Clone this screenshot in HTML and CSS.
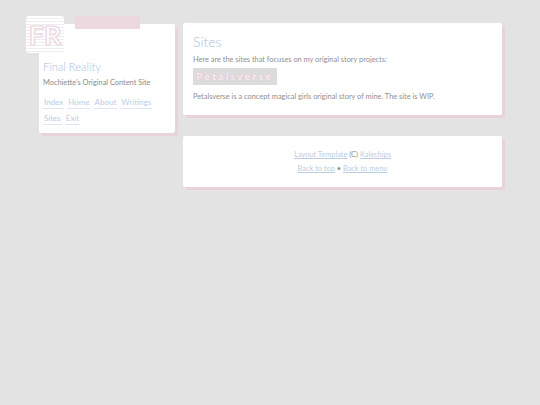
FILE: index.html
```html
<!DOCTYPE html>
<html lang="en">
<head>
<meta charset="utf-8">
<title>Final Reality</title>
<link rel="stylesheet" href="styles.css">
</head>
<body>
<div class="layout">
  <aside class="sidebar card">
    <div class="tape"></div>
    <div class="logo"><span class="logo-text">FR</span></div>
    <h1 class="site-title">Final Reality</h1>
    <p class="tagline">Mochiette's Original Content Site</p>
    <nav class="nav">
      <a href="#">Index</a><a href="#">Home</a><a href="#">About</a><a href="#">Writings</a><a href="#">Sites</a><a href="#">Exit</a>
    </nav>
  </aside>
  <main class="content">
    <section class="main card">
      <h2 class="heading">Sites</h2>
      <p class="text">Here are the sites that focuses on my original story projects:</p>
      <div class="banner">Petalsverse</div>
      <p class="text">Petalsverse is a concept magical girls original story of mine. The site is WIP.</p>
    </section>
    <footer class="footer card">
      <p class="foot-line"><a href="#">Layout Template</a> (C) <a href="#">Kalechips</a></p>
      <p class="foot-line"><a href="#">Back to top</a> • <a href="#">Back to menu</a></p>
    </footer>
  </main>
</div>
</body>
</html>
```
FILE: styles.css
```css
* { box-sizing: border-box; }
html, body { margin: 0; height: 100%; }
body {
  background: #e3e3e3;
  font-family: "Lato", "Open Sans", sans-serif;
  color: #8a8a8a;
  font-size: 7.4px;
}
.layout {
  display: flex;
  align-items: flex-start;
  gap: 8px;
  padding: 23px 38px 0 39px;
}
.card {
  background: #fff;
  border-radius: 2px;
  box-shadow: 3px 3px 0 #e8d3da;
}
.sidebar {
  position: relative;
  flex: 0 0 136px;
  height: 109px;
  margin-top: 1px;
  padding: 35px 4px 0 4px;
}
.tape {
  position: absolute;
  left: 36px;
  top: -8px;
  width: 65px;
  height: 13px;
  background: #ecd9e0;
}
.logo {
  position: absolute;
  left: -13px;
  top: -8px;
  width: 38px;
  height: 37px;
  border-radius: 3px;
  background: repeating-linear-gradient(to bottom, #fff 0, #fff 2px, #eeeef2 2px, #eeeef2 3px);
  display: flex;
  align-items: center;
  justify-content: center;
}
.logo-text {
  font-family: "Lato", sans-serif;
  font-size: 27px;
  font-weight: 700;
  line-height: 1;
  color: #fff;
  -webkit-text-stroke: 1.2px #ecd5de;
}
.site-title {
  margin: 0;
  font-size: 11.2px;
  font-weight: 300;
  line-height: 15px;
  color: #a9c0dc;
}
.tagline {
  margin: 4px 0 0;
  line-height: 10px;
  font-size: 7.4px;
  color: #8a8a8a;
}
.nav {
  display: flex;
  flex-wrap: wrap;
  gap: 3px 3px;
  margin-top: 8px;
}
.nav a {
  display: block;
  height: 13px;
  padding: 0 1px;
  font-size: 8px;
  line-height: 12px;
  color: #bccde3;
  text-decoration: none;
  border-bottom: 1px solid #dfe6f0;
}
.content {
  flex: 1;
  display: flex;
  flex-direction: column;
  gap: 21px;
}
.main {
  height: 92px;
  padding: 10px 10px 0;
}
.heading {
  margin: 0;
  font-size: 14px;
  font-weight: 300;
  line-height: 17px;
  color: #a9c0dc;
}
.text {
  margin: 4px 0 0;
  line-height: 11px;
  color: #8f8f8f;
}
.banner {
  width: 84px;
  height: 17px;
  margin: 3px 0 6px;
  background: #dcdcdc;
  color: #fff;
  font-size: 9.5px;
  line-height: 17px;
  letter-spacing: 2.7px;
  text-align: center;
  white-space: nowrap;
  text-shadow: 0 0 1px #e9a9c0, 0 0 2px #eeb9cb;
}
.footer {
  height: 51px;
  padding-top: 14px;
  text-align: center;
}
.foot-line {
  margin: 0 0 4px;
  line-height: 10px;
  color: #8f8f8f;
}
.foot-line a { color: #bccde3; }
```
